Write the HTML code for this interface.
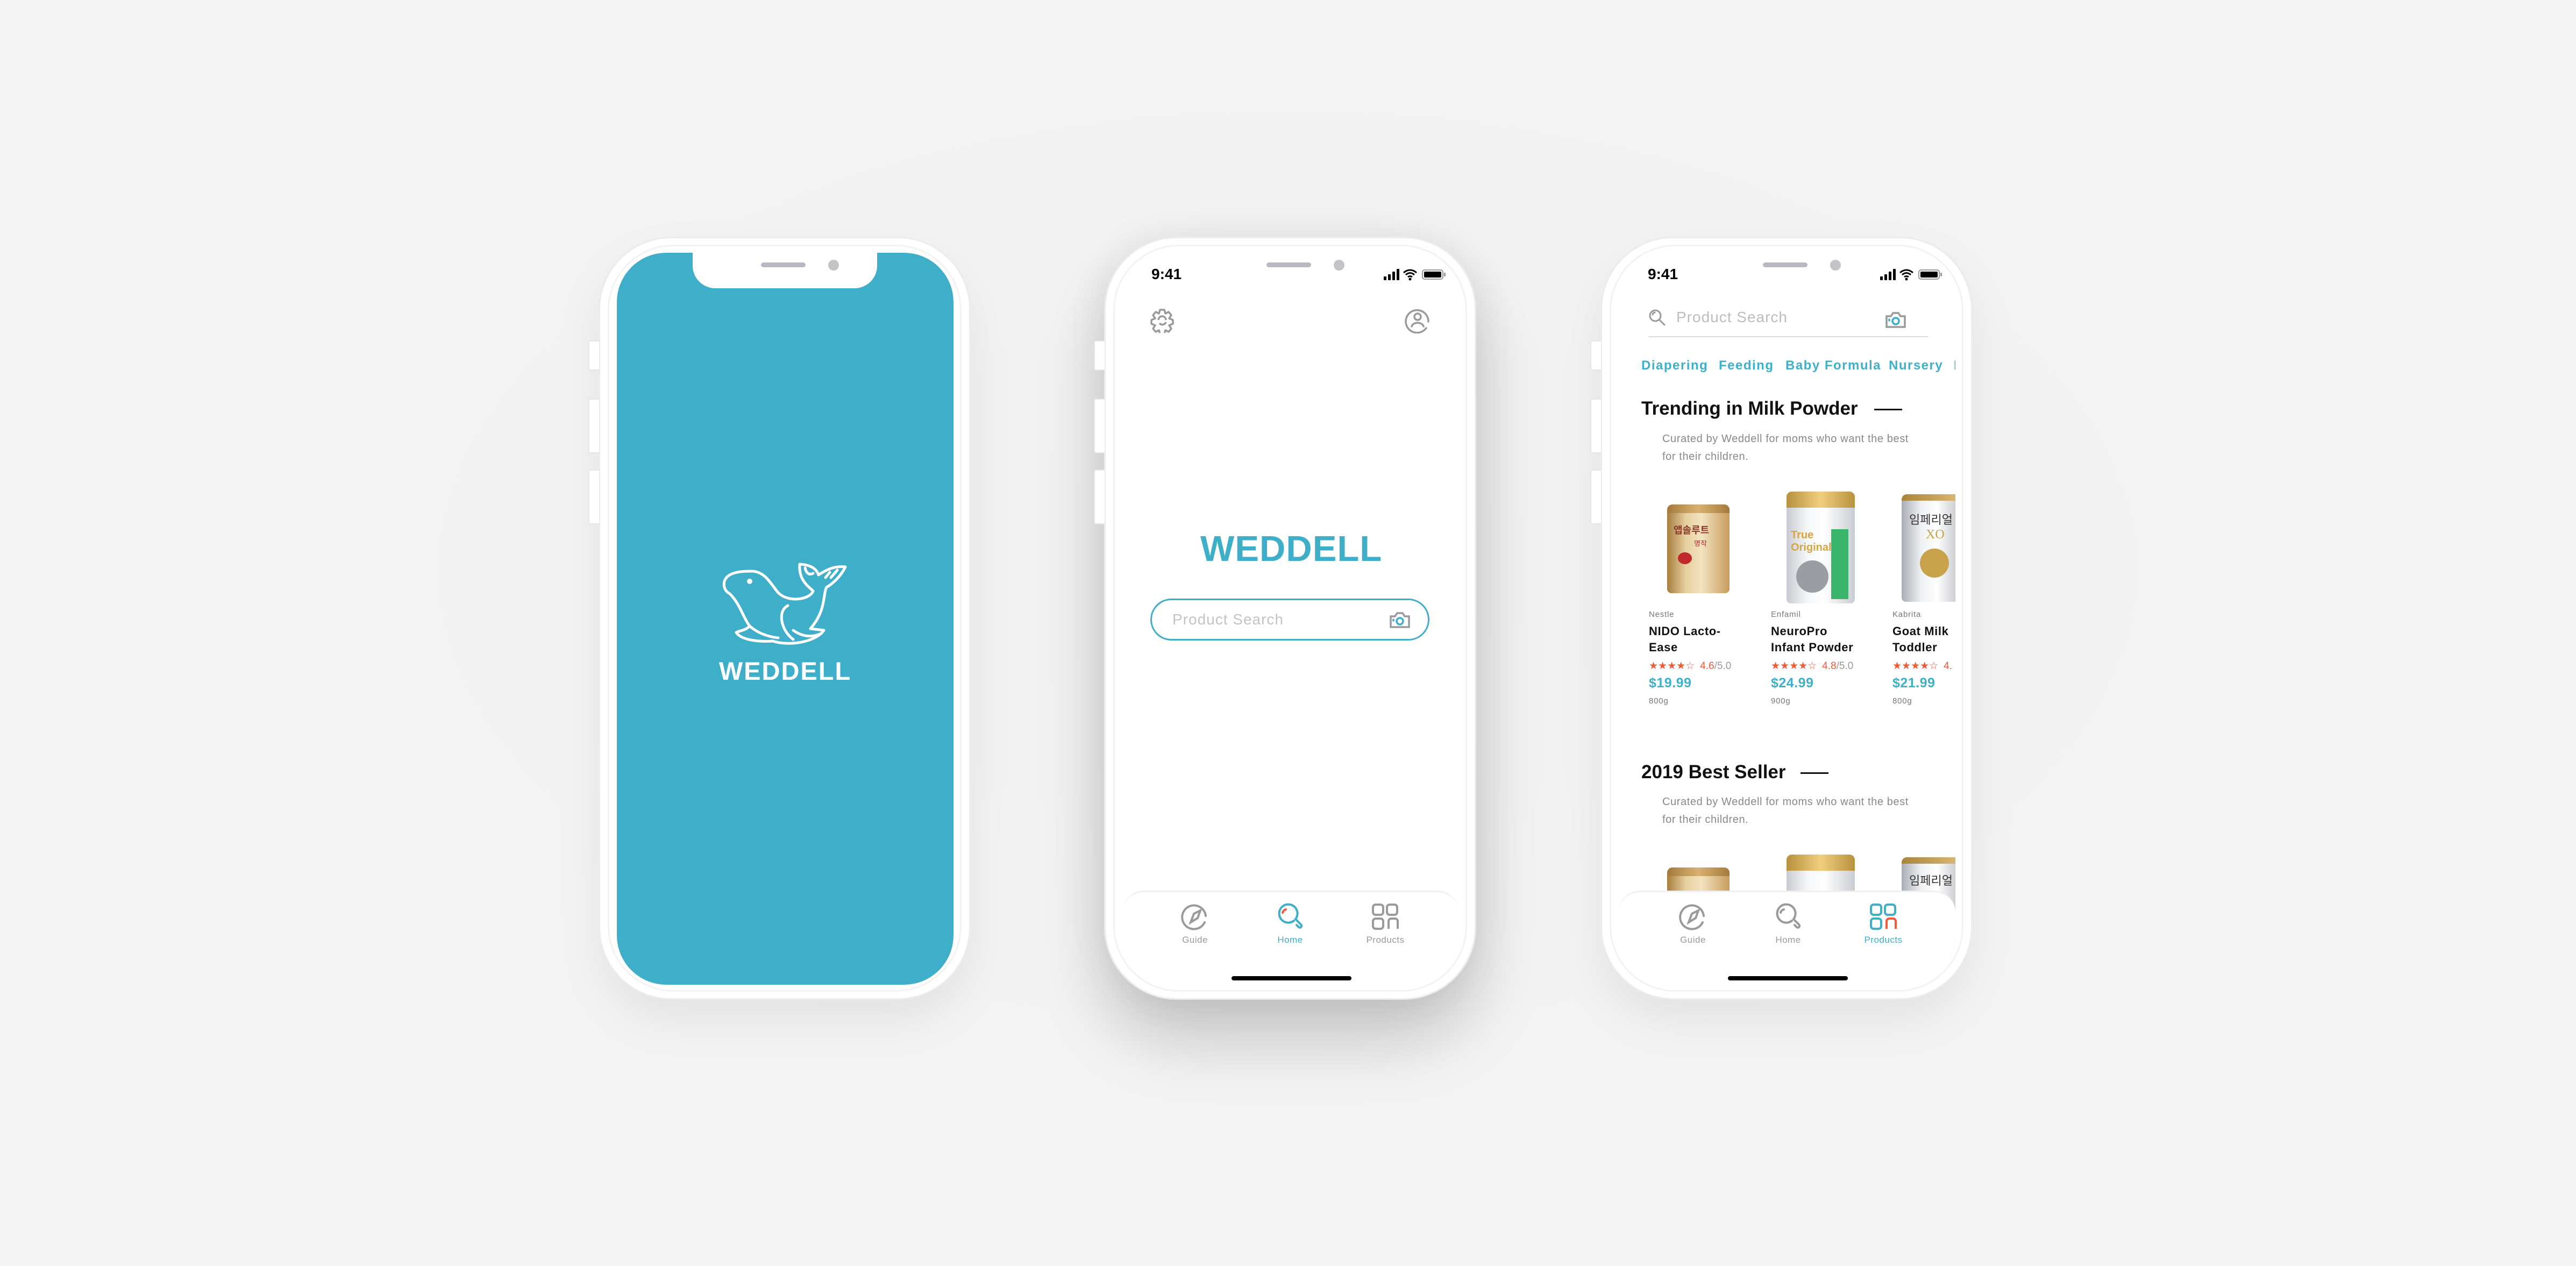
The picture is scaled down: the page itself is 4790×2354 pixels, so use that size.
<!DOCTYPE html>
<html><head><meta charset="utf-8"><style>
*{margin:0;padding:0;box-sizing:border-box}
body{width:4790px;height:2354px;background:#f3f3f3;position:relative;overflow:hidden;font-family:"Liberation Sans","DejaVu Sans",sans-serif}
.bg{position:absolute;inset:0;background:radial-gradient(ellipse at 50% 45%,#f1f1f1 0%,#f4f4f4 60%,#f5f5f5 100%)}
.phone{position:absolute;top:440px;width:692px;height:1419px;border-radius:135px;background:#fff;border:3px solid #ececec}
.phone .rim{position:absolute;left:14px;top:12px;right:14px;bottom:12px;border-radius:122px;border:3px solid #f3f3f3}
.btn{position:absolute;left:-22px;width:20px;background:#fff;border:2px solid #e6e6e6;border-right:none;border-radius:4px 0 0 4px}
.screen{position:absolute;left:31px;top:27px;width:626px;height:1361px;border-radius:92px;overflow:hidden;background:#fff}
.notch{position:absolute;left:141px;top:-10px;width:343px;height:76px;background:#fff;border-radius:0 0 42px 42px;z-index:5}
.notch .spk{position:absolute;left:127px;top:28px;width:83px;height:9px;border-radius:5px;background:#b9b9c3}
.notch .cam{position:absolute;left:252px;top:23px;width:20px;height:20px;border-radius:50%;background:#c3c3c8}
.time{position:absolute;left:54px;top:24px;font-size:28px;font-weight:bold;color:#000;z-index:6}
.status{position:absolute;left:486px;top:29px;z-index:6}
.tab{position:absolute;left:0;top:1186px;width:626px;height:200px;background:#fff;border-top:3px solid #f0f0f0;border-radius:40px 40px 0 0;z-index:4}
.ti{position:absolute;top:20px;width:100px;margin-left:-50px;text-align:center}
.ti span{display:block;font-size:17px;color:#9a9a9a;margin-top:2px;letter-spacing:.5px}
.hi{position:absolute;left:203px;top:156px;width:223px;height:8px;border-radius:4px;background:#000}
.cat{position:absolute;top:199px;font-size:24px;font-weight:bold;color:#3fb0c9;letter-spacing:1.5px}
.h2{position:absolute;left:42px;font-size:35px;font-weight:bold;color:#111;letter-spacing:0}
.cur{position:absolute;left:81px;font-size:20px;color:#888;line-height:33px;letter-spacing:.6px}
.col{position:absolute;top:664px;width:220px}
.brand{font-size:15px;color:#777;letter-spacing:.8px}
.name{font-size:22px;font-weight:bold;color:#111;line-height:30px;margin-top:8px;letter-spacing:.6px}
.stars{font-size:19px;color:#f05a3a;margin-top:8px;white-space:nowrap;font-family:"DejaVu Sans",sans-serif}
.stars b{font-weight:normal;font-family:"Liberation Sans",sans-serif;font-size:19px;margin-left:10px}
.stars i{font-style:normal;color:#999;font-family:"Liberation Sans",sans-serif}
.price{font-size:25px;color:#3fb0c9;font-weight:bold;margin-top:6px;letter-spacing:.5px}
.wt{font-size:15px;color:#777;margin-top:10px;letter-spacing:.8px}
.can{position:absolute;border-radius:10px 10px 8px 8px;overflow:hidden}
</style></head><body>
<div class="bg"></div>

<!-- Phone 1 -->
<div class="phone" style="left:1113px;box-shadow:0 40px 90px rgba(0,0,0,.07)">
 <div class="btn" style="top:190px;height:56px"></div><div class="btn" style="top:298px;height:102px"></div><div class="btn" style="top:430px;height:102px"></div>
 <div class="rim"></div>
 <div class="screen" style="background:#3faec8">
  <div class="notch"><div class="spk"></div><div class="cam"></div></div>
  <svg style="position:absolute;left:196px;top:570px" width="236" height="162" viewBox="-4 -4 236 162" fill="none" stroke="#fff" stroke-width="5" stroke-linejoin="round" stroke-linecap="round">
   <path d="M0,37 C5,20 30,18 50,18 C75,18 85,40 100,58 C120,78 160,70 165,55 C155,45 138,35 140,5 C155,6 170,10 175,25 C190,15 205,8 225,10 C215,30 200,42 190,48 C183,60 190,90 160,125 L185,128 C170,150 120,158 90,148 C60,150 30,145 22,132 C30,128 40,128 47,120 C35,105 30,80 10,60 C0,55 -2,45 0,37 Z"/>
   <path d="M118,82 C98,92 105,128 128,145"/><path d="M128,128 C145,140 162,142 180,134"/><path d="M47,120 C60,132 80,140 100,142"/>
   <path d="M150,12 C152,22 158,26 165,22"/><path d="M196,20 L188,30"/><path d="M210,16 L198,30"/>
   <circle cx="47" cy="37" r="2.5" fill="#fff"/>
  </svg>
  <div style="position:absolute;left:0;width:626px;top:750px;text-align:center;color:#fff;font-size:47px;font-weight:900;letter-spacing:2px">WEDDELL</div>
 </div>
</div>

<!-- Phone 2 -->
<div class="phone" style="left:2053px;box-shadow:0 70px 180px rgba(0,0,0,.2),0 0 80px rgba(0,0,0,.06)">
 <div class="btn" style="top:190px;height:56px"></div><div class="btn" style="top:298px;height:102px"></div><div class="btn" style="top:430px;height:102px"></div>
 <div class="rim"></div>
 <div class="screen">
  <div class="notch"><div class="spk"></div><div class="cam"></div></div>
  <div class="time">9:41</div>
  <svg class="status" width="116" height="24" viewBox="0 0 116 24"><rect x="0" y="15" width="5" height="7" rx="1"/><rect x="8" y="11" width="5" height="11" rx="1"/><rect x="16" y="6" width="5" height="16" rx="1"/><rect x="24" y="1" width="5" height="21" rx="1"/><path d="M37,8 Q49,-2 61,8 M41,12 Q49,5 57,12 M45,16 Q49,13 53,16" stroke="#000" stroke-width="3" fill="none"/><circle cx="49" cy="20" r="2.5"/><rect x="72" y="3" width="38" height="17" rx="4" fill="none" stroke="#999" stroke-width="2"/><rect x="75" y="6" width="32" height="11" rx="2"/><rect x="112" y="8" width="3" height="7" rx="1" fill="#999"/></svg>
  <svg style="position:absolute;left:51px;top:103px" width="46" height="46" viewBox="0 0 46 46" fill="none" stroke="#9a9a9e" stroke-width="3.5" stroke-linejoin="round"><path d="M19,3 h8 l2,7 l6,-3 l5,6 l-4,6 l7,3 v7 l-7,3 l4,6 l-5,6 l-6,-3 l-2,7 h-8 l-2,-7 l-6,3 l-5,-6 l4,-6 l-7,-3 v-7 l7,-3 l-4,-6 l5,-6 l6,3 z"/><path d="M16,22 a7,7 0 0 1 14,0 M30,26 a7,7 0 0 1 -12,2"/></svg>
  <svg style="position:absolute;left:525px;top:102px" width="48" height="48" viewBox="0 0 48 48" fill="none" stroke="#9a9a9e" stroke-width="3.5" stroke-linecap="round"><path d="M40,38 A21,21 0 1 1 44,26"/><circle cx="24" cy="17" r="6"/><path d="M13,35 C15,26 33,26 35,35"/></svg>
  <div style="position:absolute;left:145px;top:512px;font-size:67px;font-weight:bold;color:#3faec8;letter-spacing:1px">WEDDELL</div>
  <div style="position:absolute;left:52px;top:643px;width:519px;height:78px;border:3.5px solid #3faec8;border-radius:40px">
   <div style="position:absolute;left:38px;top:20px;font-size:28px;color:#c4c4c4;letter-spacing:1px">Product Search</div>
   <svg style="position:absolute;left:440px;top:20px" width="42" height="34" viewBox="0 0 42 34" fill="none" stroke="#9a9a9e" stroke-width="3.5" stroke-linecap="round"><path d="M4,10 h8 l4,-6 h10 l4,6 h8 v20 h-34 z"/><circle cx="21" cy="19" r="6" stroke="#3faec8"/><path d="M9,16 v2" stroke="#3faec8"/></svg>
  </div>
  <div class="tab">
   <div class="ti" style="left:135px"><svg width="52" height="52" viewBox="0 0 52 52" fill="none" stroke="#9a9a9e" stroke-width="4" stroke-linecap="round"><path d="M44,36 A22,22 0 1 1 46,24"/><path d="M18,36 l6,-16 l12,-6 l-5,14 z"/></svg><span>Guide</span></div>
   <div class="ti" style="left:312px"><svg width="52" height="52" viewBox="0 0 52 52" fill="none" stroke-width="4" stroke-linecap="round"><path d="M33,33 A17,17 0 1 1 36,30 l10,10 a3,3 0 0 1 -4,5 l-4,-4" stroke="#3faec8"/><path d="M12,18 a8,8 0 0 1 6,-6" stroke="#f05a3a"/></svg><span style="color:#3faec8">Home</span></div>
   <div class="ti" style="left:489px"><svg width="52" height="52" viewBox="0 0 52 52" fill="none" stroke="#9a9a9e" stroke-width="4"><rect x="3" y="3" width="19" height="19" rx="5"/><rect x="29" y="3" width="19" height="19" rx="5"/><rect x="3" y="29" width="19" height="19" rx="5"/><path d="M32,48 v-14 a5,5 0 0 1 5,-5 h7 a5,5 0 0 1 5,5 v14"/></svg><span>Products</span></div>
   <div class="hi"></div>
  </div>
 </div>
</div>

<!-- Phone 3 -->
<div class="phone" style="left:2976px;box-shadow:0 40px 90px rgba(0,0,0,.07)">
 <div class="btn" style="top:190px;height:56px"></div><div class="btn" style="top:298px;height:102px"></div><div class="btn" style="top:430px;height:102px"></div>
 <div class="rim"></div>
 <div class="screen">
  <div class="notch"><div class="spk"></div><div class="cam"></div></div>
  <div class="time">9:41</div>
  <svg class="status" width="116" height="24" viewBox="0 0 116 24"><rect x="0" y="15" width="5" height="7" rx="1"/><rect x="8" y="11" width="5" height="11" rx="1"/><rect x="16" y="6" width="5" height="16" rx="1"/><rect x="24" y="1" width="5" height="21" rx="1"/><path d="M37,8 Q49,-2 61,8 M41,12 Q49,5 57,12 M45,16 Q49,13 53,16" stroke="#000" stroke-width="3" fill="none"/><circle cx="49" cy="20" r="2.5"/><rect x="72" y="3" width="38" height="17" rx="4" fill="none" stroke="#999" stroke-width="2"/><rect x="75" y="6" width="32" height="11" rx="2"/><rect x="112" y="8" width="3" height="7" rx="1" fill="#999"/></svg>
  <svg style="position:absolute;left:55px;top:104px" width="34" height="34" viewBox="0 0 34 34" fill="none" stroke="#9a9a9e" stroke-width="3" stroke-linecap="round"><circle cx="13" cy="13" r="10"/><path d="M21,21 l9,9"/><path d="M8,11 a5,5 0 0 1 4,-4"/></svg>
  <div style="position:absolute;left:107px;top:104px;font-size:28px;color:#bdbdbd;letter-spacing:1px">Product Search</div>
  <svg style="position:absolute;left:494px;top:108px" width="42" height="34" viewBox="0 0 42 34" fill="none" stroke="#9a9a9e" stroke-width="3.5" stroke-linecap="round"><path d="M4,10 h8 l4,-6 h10 l4,6 h8 v20 h-34 z"/><circle cx="21" cy="19" r="6" stroke="#3faec8"/><path d="M9,16 v2" stroke="#3faec8"/></svg>
  <div style="position:absolute;left:55px;top:155px;width:520px;height:2px;background:#ddd"></div>
  <div class="cat" style="left:42px;top:196px">Diapering</div><div class="cat" style="left:186px;top:196px">Feeding</div><div class="cat" style="left:310px;top:196px">Baby Formula</div><div class="cat" style="left:502px;top:196px">Nursery</div><div class="cat" style="left:623px;top:196px">B</div>
  <div class="h2" style="top:270px">Trending in Milk Powder</div><div style="position:absolute;left:475px;top:290px;width:52px;height:2.5px;background:#111"></div>
  <div class="cur" style="top:330px">Curated by Weddell for moms who want the best<br>for their children.</div>

  <div class="can" style="left:90px;top:468px;width:116px;height:165px;background:linear-gradient(90deg,#a77d3f,#e7cf9f 30%,#f3e3c0 55%,#c79d5c 100%)"><div style="height:16px;background:linear-gradient(90deg,#a47a3c,#d8b170,#a47a3c)"></div><div style="margin:18px 0 0 12px;font-size:18px;color:#8a3a2a;font-family:'Noto Sans CJK KR',sans-serif;font-weight:bold">앱솔루트</div><div style="margin:2px 0 0 50px;font-size:13px;color:#b22">명작</div><div style="margin:8px 0 0 20px;width:26px;height:22px;background:#c0282c;border-radius:50%"></div></div>
  <div class="can" style="left:312px;top:444px;width:127px;height:208px;background:linear-gradient(90deg,#c8ccd2,#f4f6f8 30%,#fff 55%,#c9cdd2 100%)"><div style="height:30px;background:linear-gradient(90deg,#b8913e,#f0cf7f,#b8913e)"></div><div style="margin:40px 0 0 8px;font-size:20px;color:#d7a640;font-weight:bold">True Original</div><div style="position:absolute;right:12px;top:70px;width:32px;height:130px;background:#3bb56b"></div><div style="position:absolute;left:18px;top:128px;width:60px;height:60px;border-radius:50%;background:#9a9ea4"></div></div>
  <div class="can" style="left:526px;top:449px;width:120px;height:200px;background:linear-gradient(90deg,#a9adb3,#eef0f2 30%,#fff 55%,#b0b3b8 100%)"><div style="height:12px;background:linear-gradient(90deg,#a8843c,#e2c07a)"></div><div style="margin:18px 0 0 14px;font-size:22px;color:#333;font-family:'Noto Sans CJK KR',sans-serif">임페리얼</div><div style="margin:0 0 0 45px;font-size:24px;color:#c9a24c;font-family:'Liberation Serif',serif">XO</div><div style="margin:12px 0 0 34px;width:54px;height:54px;border-radius:50%;background:#c9a24c"></div></div>

  <div class="col" style="left:56px"><div class="brand">Nestle</div><div class="name">NIDO Lacto-<br>Ease</div><div class="stars">★★★★☆<b>4.6<i>/5.0</i></b></div><div class="price">$19.99</div><div class="wt">800g</div></div>
  <div class="col" style="left:283px"><div class="brand">Enfamil</div><div class="name">NeuroPro<br>Infant Powder</div><div class="stars">★★★★☆<b>4.8<i>/5.0</i></b></div><div class="price">$24.99</div><div class="wt">900g</div></div>
  <div class="col" style="left:509px"><div class="brand">Kabrita</div><div class="name">Goat Milk<br>Toddler</div><div class="stars">★★★★☆<b>4.</b></div><div class="price">$21.99</div><div class="wt">800g</div></div>

  <div class="h2" style="top:946px">2019 Best Seller</div><div style="position:absolute;left:338px;top:966px;width:52px;height:2.5px;background:#111"></div>
  <div class="cur" style="top:1005px">Curated by Weddell for moms who want the best<br>for their children.</div>
  <div class="can" style="left:90px;top:1143px;width:116px;height:165px;background:linear-gradient(90deg,#a77d3f,#e7cf9f 30%,#f3e3c0 55%,#c79d5c 100%)"><div style="height:16px;background:linear-gradient(90deg,#a47a3c,#d8b170,#a47a3c)"></div></div>
  <div class="can" style="left:312px;top:1119px;width:127px;height:200px;background:linear-gradient(90deg,#c8ccd2,#f4f6f8 30%,#fff 55%,#c9cdd2 100%)"><div style="height:30px;background:linear-gradient(90deg,#b8913e,#f0cf7f,#b8913e)"></div></div>
  <div class="can" style="left:526px;top:1124px;width:120px;height:200px;background:linear-gradient(90deg,#a9adb3,#eef0f2 30%,#fff 55%,#b0b3b8 100%)"><div style="height:12px;background:linear-gradient(90deg,#a8843c,#e2c07a)"></div><div style="margin:14px 0 0 14px;font-size:22px;color:#333;font-family:'Noto Sans CJK KR',sans-serif">임페리얼</div></div>

  <div class="tab">
   <div class="ti" style="left:138px"><svg width="52" height="52" viewBox="0 0 52 52" fill="none" stroke="#9a9a9e" stroke-width="4" stroke-linecap="round"><path d="M44,36 A22,22 0 1 1 46,24"/><path d="M18,36 l6,-16 l12,-6 l-5,14 z"/></svg><span>Guide</span></div>
   <div class="ti" style="left:315px"><svg width="52" height="52" viewBox="0 0 52 52" fill="none" stroke="#9a9a9e" stroke-width="4" stroke-linecap="round"><path d="M33,33 A17,17 0 1 1 36,30 l10,10 a3,3 0 0 1 -4,5 l-4,-4"/><path d="M12,18 a8,8 0 0 1 6,-6"/></svg><span>Home</span></div>
   <div class="ti" style="left:492px"><svg width="52" height="52" viewBox="0 0 52 52" fill="none" stroke="#3faec8" stroke-width="4"><rect x="3" y="3" width="19" height="19" rx="5"/><rect x="29" y="3" width="19" height="19" rx="5"/><rect x="3" y="29" width="19" height="19" rx="5"/><path d="M32,48 v-14 a5,5 0 0 1 5,-5 h7 a5,5 0 0 1 5,5 v14" stroke="#f05a3a"/></svg><span style="color:#3faec8">Products</span></div>
   <div class="hi"></div>
  </div>
 </div>
</div>
</body></html>
